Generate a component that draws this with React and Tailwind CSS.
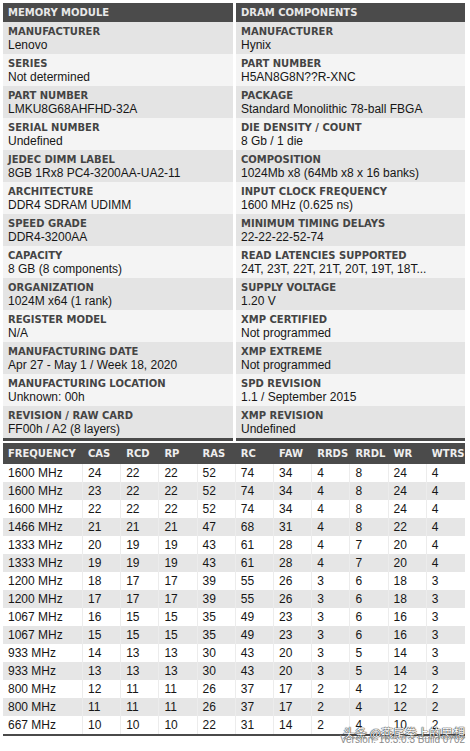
const left = [
  ["MANUFACTURER", "Lenovo"],
  ["SERIES", "Not determined"],
  ["PART NUMBER", "LMKU8G68AHFHD-32A"],
  ["SERIAL NUMBER", "Undefined"],
  ["JEDEC DIMM LABEL", "8GB 1Rx8 PC4-3200AA-UA2-11"],
  ["ARCHITECTURE", "DDR4 SDRAM UDIMM"],
  ["SPEED GRADE", "DDR4-3200AA"],
  ["CAPACITY", "8 GB (8 components)"],
  ["ORGANIZATION", "1024M x64 (1 rank)"],
  ["REGISTER MODEL", "N/A"],
  ["MANUFACTURING DATE", "Apr 27 - May 1 / Week 18, 2020"],
  ["MANUFACTURING LOCATION", "Unknown: 00h"],
  ["REVISION / RAW CARD", "FF00h / A2 (8 layers)"],
];

const right = [
  ["MANUFACTURER", "Hynix"],
  ["PART NUMBER", "H5AN8G8N??R-XNC"],
  ["PACKAGE", "Standard Monolithic 78-ball FBGA"],
  ["DIE DENSITY / COUNT", "8 Gb / 1 die"],
  ["COMPOSITION", "1024Mb x8 (64Mb x8 x 16 banks)"],
  ["INPUT CLOCK FREQUENCY", "1600 MHz (0.625 ns)"],
  ["MINIMUM TIMING DELAYS", "22-22-22-52-74"],
  ["READ LATENCIES SUPPORTED", "24T, 23T, 22T, 21T, 20T, 19T, 18T..."],
  ["SUPPLY VOLTAGE", "1.20 V"],
  ["XMP CERTIFIED", "Not programmed"],
  ["XMP EXTREME", "Not programmed"],
  ["SPD REVISION", "1.1 / September 2015"],
  ["XMP REVISION", "Undefined"],
];

const heads = ["FREQUENCY", "CAS", "RCD", "RP", "RAS", "RC", "FAW", "RRDS", "RRDL", "WR", "WTRS"];

const rows = [
  ["1600 MHz", 24, 22, 22, 52, 74, 34, 4, 8, 24, 4],
  ["1600 MHz", 23, 22, 22, 52, 74, 34, 4, 8, 24, 4],
  ["1600 MHz", 22, 22, 22, 52, 74, 34, 4, 8, 24, 4],
  ["1466 MHz", 21, 21, 21, 47, 68, 31, 4, 8, 22, 4],
  ["1333 MHz", 20, 19, 19, 43, 61, 28, 4, 7, 20, 4],
  ["1333 MHz", 19, 19, 19, 43, 61, 28, 4, 7, 20, 4],
  ["1200 MHz", 18, 17, 17, 39, 55, 26, 3, 6, 18, 3],
  ["1200 MHz", 17, 17, 17, 39, 55, 26, 3, 6, 18, 3],
  ["1067 MHz", 16, 15, 15, 35, 49, 23, 3, 6, 16, 3],
  ["1067 MHz", 15, 15, 15, 35, 49, 23, 3, 6, 16, 3],
  ["933 MHz", 14, 13, 13, 30, 43, 20, 3, 5, 14, 3],
  ["933 MHz", 13, 13, 13, 30, 43, 20, 3, 5, 14, 3],
  ["800 MHz", 12, 11, 11, 26, 37, 17, 2, 4, 12, 2],
  ["800 MHz", 11, 11, 11, 26, 37, 17, 2, 4, 12, 2],
  ["667 MHz", 10, 10, 10, 22, 31, 14, 2, 4, 10, 2],
];

function Panel({ title, items }) {
  return (
    <div className="flex flex-col border-b-[3px] border-[#4a4a4a]">
      <div className="h-[19px] bg-[#4b4b4b] pl-[5px] font-[family-name:'DejaVu_Sans',sans-serif] text-[10px] font-bold leading-[20px] text-[#e8e8e8]">
        {title}
      </div>
      {items.map(([k, v], i) => (
        <div
          key={i}
          className={
            "flex h-[32px] flex-col pl-[5px] pt-[3px] " +
            (i % 2 === 0 ? "bg-[#e4e4e4]" : "bg-[#f4f4f4]")
          }
        >
          <div className="font-[family-name:'DejaVu_Sans',sans-serif] text-[10px] font-bold leading-[13px] text-[#444444]">
            {k}
          </div>
          <div className="font-[family-name:'Liberation_Sans',Arial,sans-serif] text-[12px] leading-[15px] text-[#161616]">
            {v}
          </div>
        </div>
      ))}
    </div>
  );
}

export default function App() {
  return (
    <div className="relative h-[751px] w-[470px] overflow-hidden bg-white pl-[3px] pt-[3px]">
      <div className="grid w-[462px] grid-cols-[230px_229px] gap-x-[3px]">
        <Panel title="MEMORY MODULE" items={left} />
        <Panel title="DRAM COMPONENTS" items={right} />
      </div>
      <div className="mt-[2px] w-[462px] border-b-[2px] border-[#4a4a4a]">
        <div className="grid h-[21px] grid-cols-[80px_repeat(10,1fr)] bg-[#4b4b4b] font-[family-name:'DejaVu_Sans',sans-serif] text-[10px] font-bold leading-[21px] text-[#eeeeee]">
          {heads.map((h) => (
            <div key={h} className="pl-[5px]">
              {h}
            </div>
          ))}
        </div>
        {rows.map((r, i) => (
          <div
            key={i}
            className={
              "grid h-[18px] grid-cols-[80px_repeat(10,1fr)] font-[family-name:'Liberation_Sans',Arial,sans-serif] text-[12px] leading-[18px] text-[#161616] " +
              (i % 2 === 0 ? "bg-white" : "bg-[#e6e6e6]")
            }
          >
            {r.map((c, j) => (
              <div key={j} className="border-r border-[#ececec] pl-[5px] last:border-r-0">
                {c}
              </div>
            ))}
          </div>
        ))}
      </div>
      <div className="absolute right-[5px] top-[725px] font-[family-name:'Noto_Sans_CJK_SC',sans-serif] text-[12px] leading-[15px] text-white [text-shadow:0_0_1px_#333,0_0_1px_#333,0_0_1px_#333]">
        头条 @燕尾拳上的思想
      </div>
      <div className="absolute right-[5px] top-[734px] font-[family-name:'Liberation_Sans',Arial,sans-serif] text-[10px] leading-[11px] text-[#8a8a8a]">
        Version: 16.3.0.3 Build 0702
      </div>
    </div>
  );
}
